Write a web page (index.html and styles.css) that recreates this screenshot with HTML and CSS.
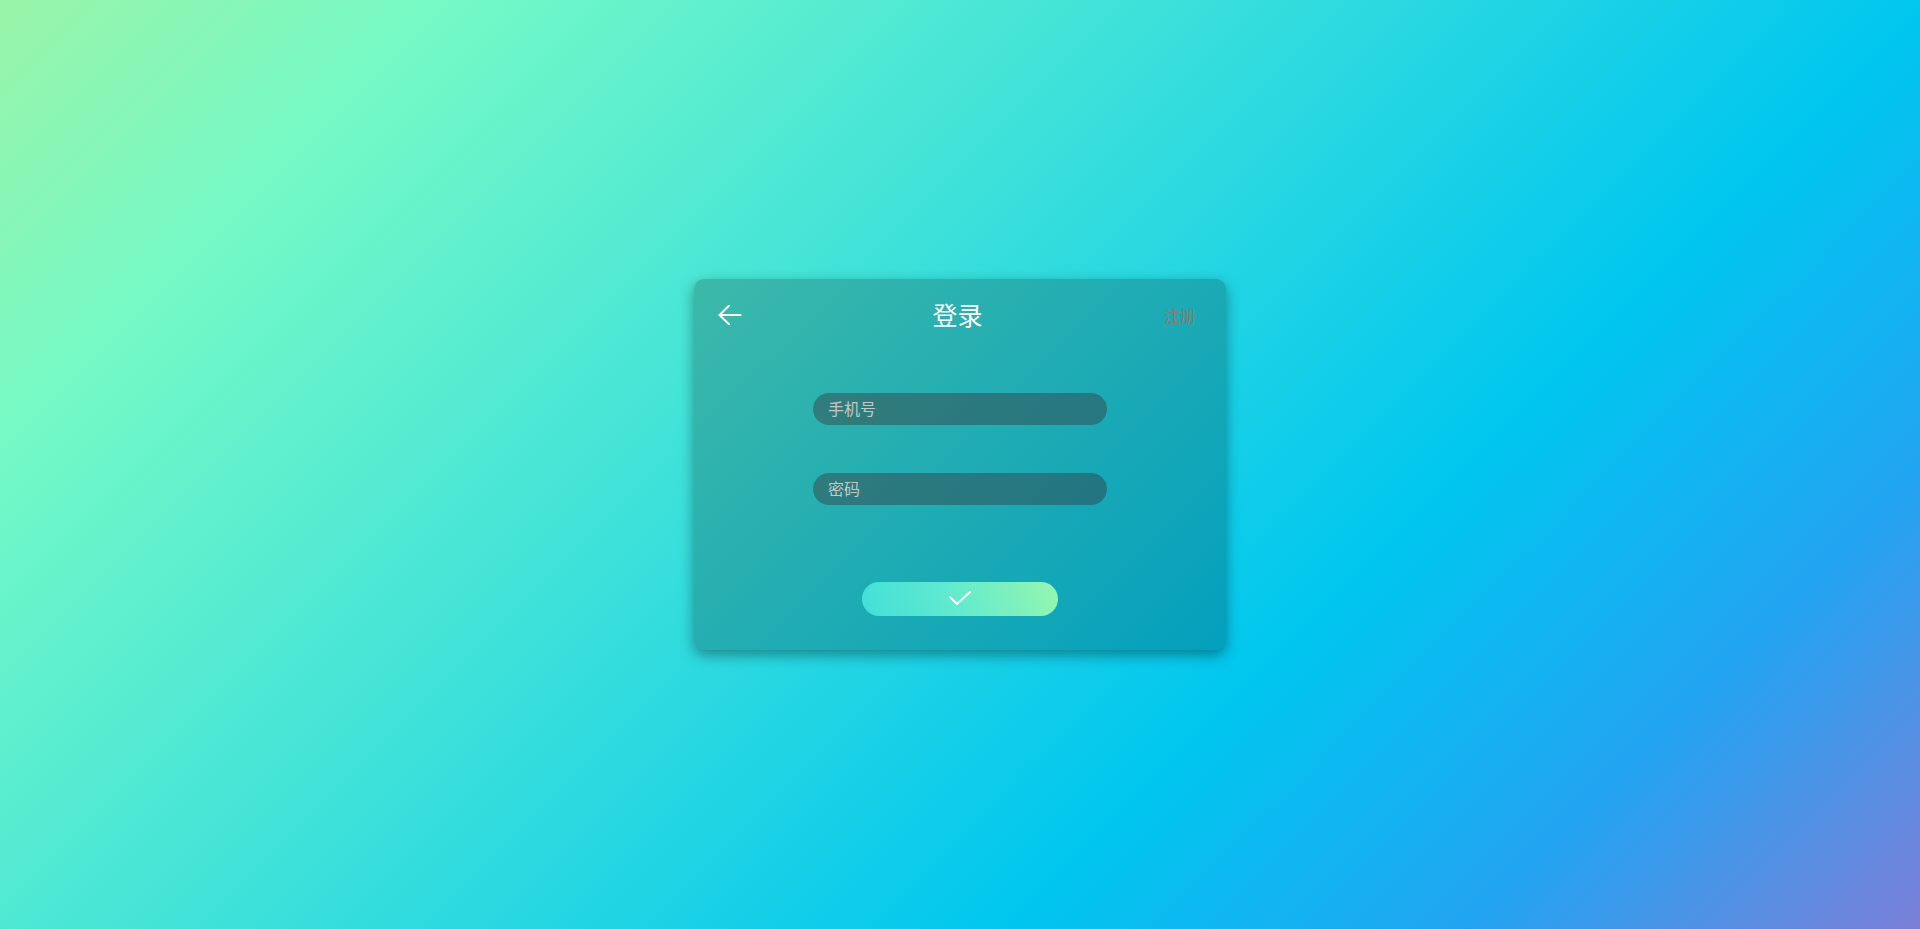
FILE: index.html
```html
<!DOCTYPE html>
<html lang="zh-CN">
<head>
<meta charset="utf-8">
<title>登录</title>
<link rel="stylesheet" href="styles.css">
</head>
<body>
<main class="page">
  <section class="card">
    <header class="card-header">
      <a class="back" href="#" aria-label="返回">
        <svg width="24" height="20" viewBox="0 0 24 20" fill="none" stroke="#fff" stroke-width="2" stroke-linecap="round" stroke-linejoin="round">
          <path d="M22.5 10H1.5"/>
          <path d="M11 0.8L1.5 10l9.5 9.2"/>
        </svg>
      </a>
      <h1 class="title">登录</h1>
      <a class="register" href="#">注册</a>
    </header>
    <form class="form">
      <input class="field" type="text" placeholder="手机号">
      <input class="field" type="password" placeholder="密码">
      <button class="submit" type="button" aria-label="登录">
        <svg width="22" height="16" viewBox="0 0 22 16" fill="none" stroke="#fff" stroke-width="2" stroke-linecap="round" stroke-linejoin="round">
          <polyline points="1,6 8,13 21,1"/>
        </svg>
      </button>
    </form>
  </section>
</main>
</body>
</html>
```

FILE: styles.css
```css
html, body {
  margin: 0;
  padding: 0;
  height: 100%;
}

body {
  font-family: "Noto Sans CJK SC", "Noto Sans", sans-serif;
  background: linear-gradient(135deg, #99f4a8 0%, #74f9c6 16%, #00c6ef 68%, #22a4f2 84%, #7c7fd7 100%);
}

.page {
  height: 100vh;
  display: flex;
  align-items: center;
  justify-content: center;
}

.card {
  width: 532px;
  height: 371px;
  box-sizing: border-box;
  border-radius: 10px;
  background: rgba(0, 0, 0, 0.2);
  box-shadow: 0 5px 14px rgba(0, 0, 0, 0.38);
  padding-top: 20px;
}

.card-header {
  height: 32px;
  display: grid;
  grid-template-columns: 1fr auto 1fr;
  align-items: center;
  padding: 0 30px 0 25px;
}

.back {
  justify-self: start;
  display: flex;
  width: 24px;
  height: 20px;
  margin-left: -1px;
}

.title {
  margin: 0;
  font-size: 25px;
  font-weight: 400;
  color: #fff;
  line-height: 32px;
  margin-top: -2px;
}

.register {
  justify-self: end;
  font-size: 16px;
  color: #8f7a69;
  text-decoration: none;
  line-height: 32px;
}

.form {
  display: flex;
  flex-direction: column;
  align-items: center;
  margin-top: 62px;
}

.field {
  width: 294px;
  height: 32px;
  box-sizing: border-box;
  border: none;
  outline: none;
  border-radius: 16px;
  padding: 0 15px 3px;
  background: rgba(60, 25, 28, 0.35);
  font-family: "Noto Sans CJK SC", "Noto Sans", sans-serif;
  font-size: 16px;
  color: #fff;
}

.field + .field {
  margin-top: 48px;
}

.field::placeholder {
  color: #c2c8c7;
}

.submit {
  margin-top: 77px;
  width: 196px;
  height: 34px;
  border: none;
  border-radius: 17px;
  background: linear-gradient(70deg, #42dfd9 0%, #60ead0 45%, #96f6ae 100%);
  display: flex;
  align-items: center;
  justify-content: center;
  padding: 0;
  cursor: pointer;
}
```
